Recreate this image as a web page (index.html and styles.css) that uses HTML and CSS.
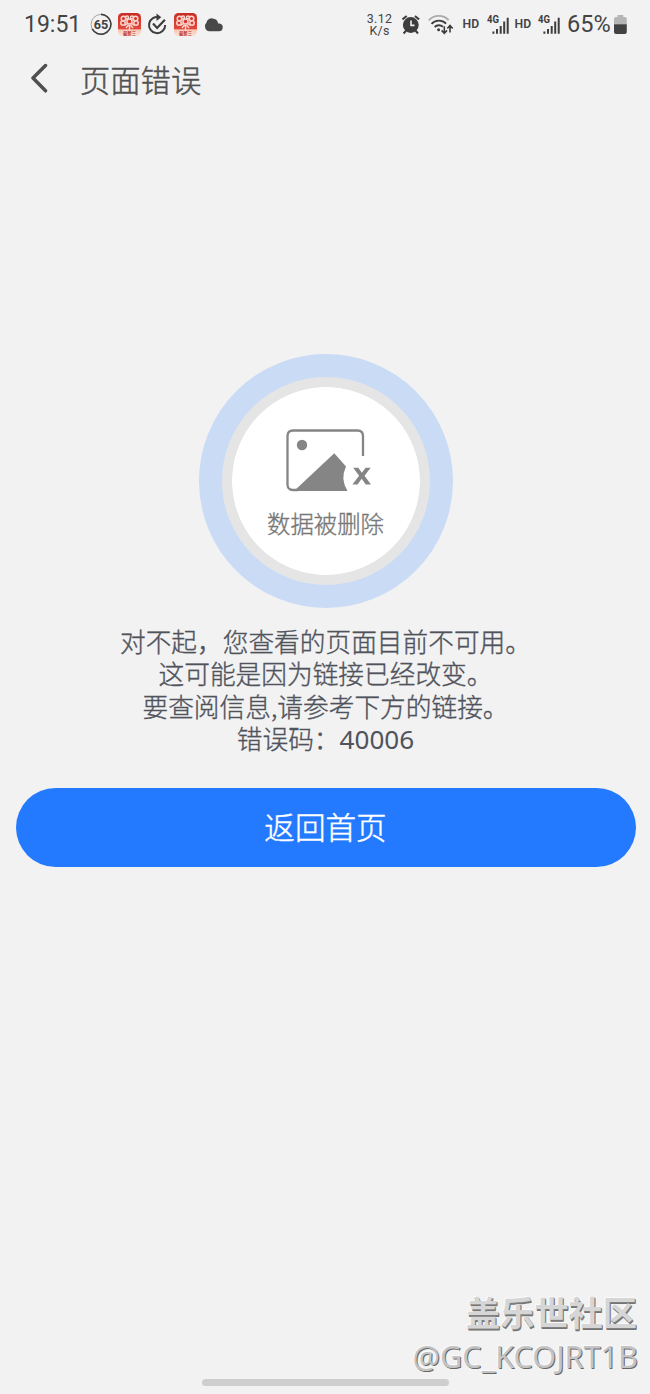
FILE: index.html
```html
<!DOCTYPE html>
<html lang="zh-CN">
<head>
<meta charset="utf-8">
<title>页面错误</title>
<link rel="stylesheet" href="styles.css">
</head>
<body>
<svg class="defs" width="0" height="0">
  <defs>
    <linearGradient id="red" x1="0" y1="0" x2="0" y2="1"><stop offset="0" stop-color="#c92c25"/><stop offset=".68" stop-color="#e2493d"/><stop offset=".74" stop-color="#f8c9b8"/><stop offset="1" stop-color="#fae3d8"/></linearGradient>
    <symbol id="app" viewBox="0 0 23 23">
      <rect width="23" height="23" rx="4.500" fill="url(#red)"/>
      <g fill="none" stroke="#f8d5cc" stroke-width="1.500"><circle cx="5.500" cy="5.500" r="2.300"/><circle cx="17.500" cy="5.500" r="2.300"/><circle cx="5" cy="10" r="2.200"/><circle cx="18" cy="10" r="2.200"/><circle cx="9" cy="4.500" r="1.500"/><circle cx="14" cy="4.500" r="1.500"/><circle cx="11.500" cy="8.500" r="2.600"/><path d="m6.500 12.500 3-2M16.500 12.500l-3-2M8 15l2.500-3M15 15l-2.500-3M11.500 12v5.500"/></g>
      <text x="11.500" y="21.800" text-anchor="middle" class="app-label">最新三</text>
    </symbol>
    <symbol id="signal" viewBox="0 0 23 48">
      <text x="0" y="23.200" class="net" textLength="12" lengthAdjust="spacingAndGlyphs">4G</text>
      <path d="M6.400 31.500v2.300M10 29v4.800M13.700 26v7.800M17.200 21.500v12.300M20.700 17.700v16.100" stroke="#3d3d3d" stroke-width="2"/>
    </symbol>
  </defs>
</svg>
<div class="screen">
  <header class="status">
    <div class="status-left">
      <span class="time">19:51</span>
      <svg class="i-65" viewBox="90 0 22 48"><circle cx="101" cy="24.300" r="9.900" fill="none" stroke="#a5a5a5" stroke-width="1"/><path d="M101 14.400a9.900 9.900 0 1 1-8.800 14.500" fill="none" stroke="#404040" stroke-width="1.600"/><text x="101" y="28.900" text-anchor="middle" class="count">65</text></svg>
      <svg class="i-app"><use href="#app"/></svg>
      <svg class="i-check" viewBox="147 0 20 48" fill="none" stroke="#3d3d3d" stroke-width="2"><path d="M159.500 17.300a8.100 8.100 0 1 0 5.700 7.700"/><path d="m156.500 13.600 4.800 3.600-4.800 3.700z" fill="#3d3d3d" stroke="none"/><path d="m153 23.600 4.100 4.300 7.800-8.200" stroke-width="2.200"/></svg>
      <svg class="i-app second"><use href="#app"/></svg>
      <svg class="i-cloud" viewBox="205 0 19 48"><path d="M209.500 31.300h9.400a4 4 0 0 0 .7-7.900h-1.400a6.100 6.100 0 0 0-11.900-.5c-1.200 1-1.400 2.200-1.300 3.600.1 2.900 2 4.800 4.500 4.800z" fill="#484848"/></svg>
    </div>
    <div class="status-right">
      <div class="speed"><span>3.12</span><span>K/s</span></div>
      <svg class="i-alarm" viewBox="401 0 20 48"><circle cx="410.800" cy="25" r="7.900" fill="#3d3d3d"/><path d="m402.500 19.400 4.200-3.400M419.100 19.400l-4.200-3.400M406.200 30.500l-2.600 3M415.400 30.500l2.600 3" stroke="#3d3d3d" stroke-width="2"/><path d="M411 20.500v4.900h3.500" stroke="#f2f2f2" stroke-width="1.600" fill="none"/></svg>
      <svg class="i-wifi" viewBox="428 0 26 48" fill="none" stroke="#3d3d3d" stroke-width="1.900"><path d="M428.800 20.300a13.500 13.500 0 0 1 19.800-.3" stroke="#aaa"/><path d="M431.500 23.800a10.200 10.200 0 0 1 14.600-.2M434.700 27a5.900 5.900 0 0 1 8.200-.2"/><circle cx="438.600" cy="29.800" r="1.500" fill="#3d3d3d" stroke="none"/><path d="M444.300 26.300v7M441.600 30.400l2.700 3 2.700-3M450 32.400v-6.600M447.300 28.500l2.700-3 2.700 3" stroke-width="1.600"/></svg>
      <span class="hd">HD</span>
      <svg class="i-signal"><use href="#signal"/></svg>
      <span class="hd">HD</span>
      <svg class="i-signal two"><use href="#signal"/></svg>
      <span class="percent">65%</span>
      <svg class="i-battery" viewBox="614 0 13 48"><path d="M617.500 15h5.800v2h1.500a2 2 0 0 1 2 2v5.500H614V19a2 2 0 0 1 2-2h1.500z" fill="#b5b5b5"/><path d="M614 24.200h12.800V32a2 2 0 0 1-2 2H616a2 2 0 0 1-2-2z" fill="#424242"/></svg>
    </div>
  </header>
  <nav class="titlebar">
    <svg class="back" viewBox="0 0 18 30"><path d="M15.500 2.500 3 15l12.500 12.800" fill="none" stroke="#505050" stroke-width="3.500" stroke-linecap="round" stroke-linejoin="round"/></svg>
    <h1 class="title">页面错误</h1>
  </nav>
  <main class="content">
    <div class="badge">
      <svg class="photo" viewBox="0 0 88 64"><path d="M77 27V7q0-5.500-5.500-5.500H7Q1.500 1.500 1.500 7V55.500q0 5.500 5.500 5.500h5" fill="none" stroke="#858585" stroke-width="2.300"/><circle cx="16" cy="16" r="5.200" fill="#858585"/><path d="M8 62 48.300 24.200 60 37.500q-6 12.500 1.500 24.500z" fill="#858585"/><path d="M67.200 38.700h5.100l3.600 5.100 3.700-5.100h5.100l-6.200 8.100 6.500 8.800h-5.200l-4.100-5.900-4.200 5.900h-5.100l6.700-8.800z" fill="#858585"/></svg>
      <span class="caption">数据被删除</span>
    </div>
    <div class="message"><div>对不起，您查看的页面目前不可用。</div><div>这可能是因为链接已经改变。</div><div>要查阅信息,请参考下方的链接。</div><div>错误码：<span class="code">40006</span></div></div>
    <button class="home">返回首页</button>
  </main>
  <footer class="footer">
    <div class="community">盖乐世社区</div>
    <div class="handle">@GC_KCOJRT1B</div>
    <div class="gesture"></div>
  </footer>
</div>
</body>
</html>
```
FILE: styles.css
```css
* { box-sizing: border-box; }
body { margin: 0; background: #f2f2f2; font-family: "Noto Sans CJK SC", sans-serif; color: #505050; }
.defs { position: absolute; }
.screen { width: 650px; height: 1394px; display: flex; flex-direction: column; overflow: hidden; }
.status { height: 48px; display: flex; justify-content: space-between; padding: 0 23px 0 24px; font-family: Roboto, sans-serif; color: #444; }
.status-left, .status-right { display: flex; align-items: center; flex: none; }
.status svg { display: block; height: 48px; flex: none; }
.time { width: 66px; font-size: 23px; line-height: 48px; padding-top: 1px; }
.i-65 { width: 22px; }
.count { font: 700 12.6px Roboto, sans-serif; fill: #404040; }
.status .i-app { width: 23px; height: 23px; margin-left: 5.5px; }
.app-label { font: 700 4.3px "Noto Sans CJK SC", sans-serif; fill: #bd3027; }
.i-check { width: 20px; margin-left: 6.5px; }
.status .second { margin-left: 7px; }
.i-cloud { width: 19px; margin-left: 8px; }
.speed { width: 26px; display: flex; flex-direction: column; align-items: center; font-size: 12.4px; line-height: 12px; margin: 1px 8.5px 0 0; letter-spacing: .3px; }
.i-alarm { width: 20px; margin-right: 7px; }
.i-wifi { width: 26px; margin-right: 8.5px; }
.hd { width: 17px; font-size: 12.2px; font-weight: 600; line-height: 48px; }
.i-signal { width: 23px; margin: 0 5px 0 7px; }
.i-signal.two { margin: 0 6px 0 6.5px; }
.net { font: 700 10px Roboto, sans-serif; fill: #3d3d3d; }
.percent { width: 47px; font-size: 23.5px; line-height: 48px; }
.i-battery { width: 13px; }
.titlebar { height: 64px; display: flex; align-items: center; padding-left: 30px; }
.back { width: 18px; height: 30px; margin: -4px 32px 0 0; }
.title { margin: -2px 0 0; font-size: 30.3px; font-weight: 300; line-height: 64px; -webkit-text-stroke: .45px currentColor; }
.content { display: flex; flex-direction: column; align-items: center; padding: 242px 14px 0 15px; }
.badge { width: 254px; height: 254px; flex: none; border-radius: 50%; border: 23px solid #c9dbf5; background: radial-gradient(circle, #fff 93.5px, #e5e5e5 94.2px); display: flex; flex-direction: column; align-items: center; padding-top: 52px; }
.photo { width: 88px; height: 64px; margin-left: 9px; }
.caption { font-size: 23.4px; line-height: 34px; margin-top: 13px; color: #777; font-weight: 300; -webkit-text-stroke: .35px currentColor; }
.message { margin: 17px 0 0; font-size: 25.7px; font-weight: 300; line-height: 32.4px; text-align: center; color: #50535c; white-space: nowrap; -webkit-text-stroke: .35px currentColor; }
.code { font-family: "Noto Sans", sans-serif; font-size: 26.1px; font-weight: 400; line-height: 1; -webkit-text-stroke: 0; }
.home { width: 620px; height: 79px; margin: 33px 0 0; padding: 0 0 3px; border: 0; border-radius: 40px; background: #237aff; color: #fff; font: 300 30.6px "Noto Sans CJK SC", sans-serif; -webkit-text-stroke: .45px #fff; }
.footer { margin-top: auto; display: flex; flex-direction: column; align-items: flex-end; padding: 0 12px 8px 0; }
.community { font-size: 34.2px; line-height: 42px; font-weight: 700; color: #d6d6d6; text-shadow: 1px 1px 0 #808080, 1px 2px 0 #747474, -1px -1px 0 #fafafa; margin: 0 1px 4px 0; }
.handle { font-family: "Noto Sans", sans-serif; font-size: 30.6px; line-height: 40px; color: #c4c4c4; text-shadow: 1px 1px 0 #686868, -1px -1px 0 #fafafa; margin-bottom: 3px; }
.gesture { width: 247px; height: 7px; border-radius: 4px; background: #cecece; align-self: flex-start; margin-left: 202px; }
```
